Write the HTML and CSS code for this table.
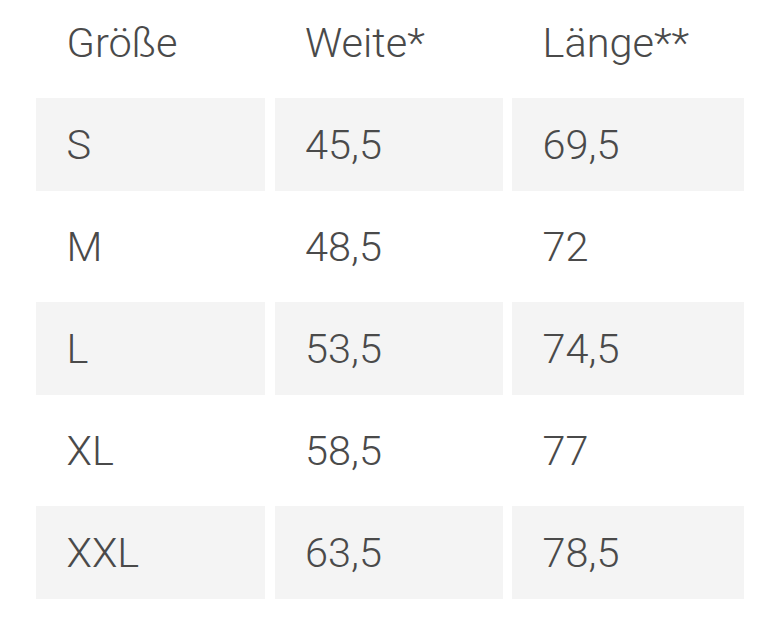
FILE: index.html
```html
<!DOCTYPE html>
<html lang="de">
<head>
<meta charset="utf-8">
<title>Größentabelle</title>
<link rel="stylesheet" href="styles.css">
</head>
<body>
<div class="size-table">
  <div class="head">Größe</div>
  <div class="head">Weite*</div>
  <div class="head">Länge**</div>

  <div class="cell shaded">S</div>
  <div class="cell shaded">45,5</div>
  <div class="cell shaded">69,5</div>

  <div class="cell">M</div>
  <div class="cell">48,5</div>
  <div class="cell">72</div>

  <div class="cell shaded">L</div>
  <div class="cell shaded">53,5</div>
  <div class="cell shaded">74,5</div>

  <div class="cell">XL</div>
  <div class="cell">58,5</div>
  <div class="cell">77</div>

  <div class="cell shaded">XXL</div>
  <div class="cell shaded">63,5</div>
  <div class="cell shaded">78,5</div>
</div>
</body>
</html>
```
FILE: styles.css
```css
html, body {
  margin: 0;
  padding: 0;
  background: #ffffff;
}

.size-table {
  display: grid;
  grid-template-columns: 229px 228px 232px;
  column-gap: 9.5px;
  row-gap: 9px;
  padding-left: 36px;
  font-family: "Roboto Light", Roboto, "Liberation Sans", sans-serif;
  font-weight: 300;
  font-size: 41.5px;
  color: #4a4a4a;
}

.head {
  height: 85px;
  line-height: 85px;
  padding-bottom: 4px;
  padding-left: 30.5px;
  white-space: nowrap;
}

.cell {
  height: 93px;
  line-height: 93px;
  padding-left: 30.5px;
  white-space: nowrap;
}

.shaded {
  background: #f4f4f4;
}
```
